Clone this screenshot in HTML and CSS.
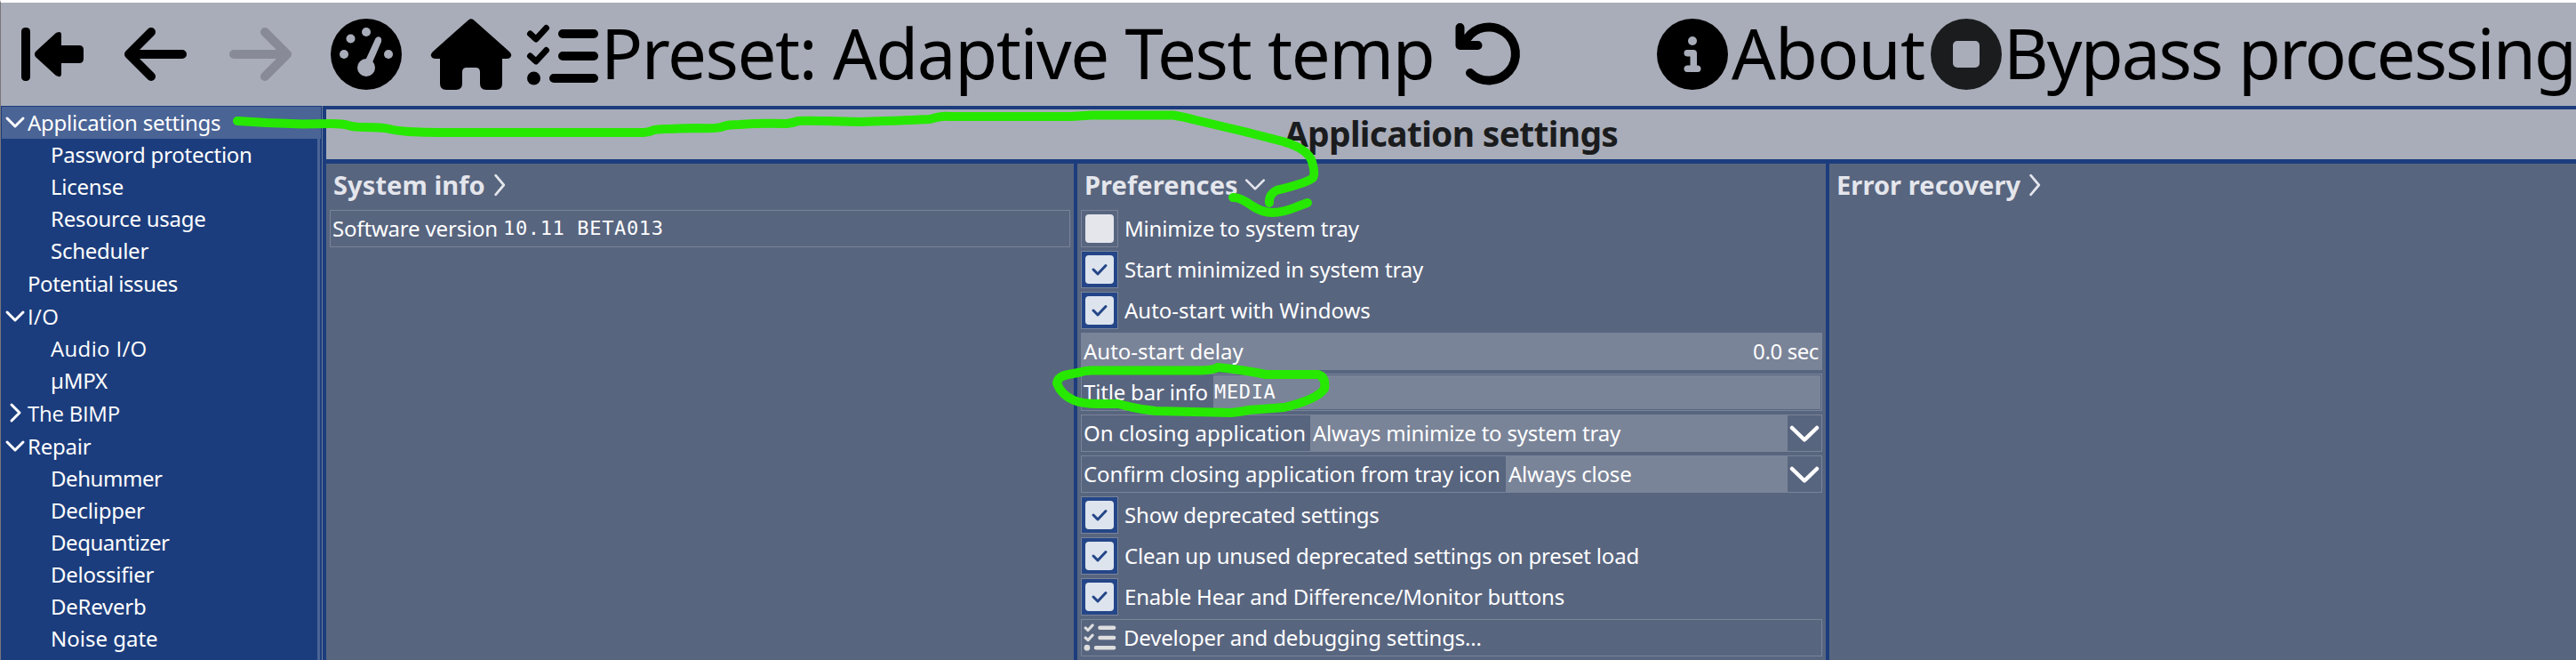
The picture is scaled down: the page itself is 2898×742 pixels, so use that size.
FILE: index.html
```html
<!DOCTYPE html>
<html lang="en">
<head>
    <meta charset="UTF-8">
    <meta name="viewport" content="width=device-width, initial-scale=1.0">
    <title>Application settings</title>
    <link rel="stylesheet" href="styles.css">
</head>
<body>
    <header class="toolbar">
        <svg class="icons-left" width="680" height="116" viewBox="0 3 680 116">
            <!-- first -->
            <rect x="24" y="31" width="10" height="60" rx="4.5"/>
            <path d="M40 58 L63 37 Q69 34 69 39 V51 H89 Q94 51 94 56 V66 Q94 71 89 71 H69 V83 Q69 88 63 85 L40 64 Q38 61 40 58Z"/>
            <!-- back -->
            <path class="line" d="M170 36 L145 61 L170 86 M145 61 H205"/>
            <!-- forward -->
            <path class="line off" d="M298 36 L323 61 L298 86 M323 61 H263"/>
            <!-- gauge -->
            <circle cx="412" cy="61" r="40"/>
            <g class="hole">
                <circle cx="412" cy="36" r="5"/>
                <circle cx="394.500" cy="43.500" r="5"/>
                <circle cx="387" cy="61" r="5"/>
                <circle cx="437" cy="61" r="5"/>
                <circle cx="412" cy="76" r="10"/>
                <path d="M411 68 L422.500 43 Q425 40 428 42 Q430 44 429 47 L419 70Z"/>
            </g>
            <!-- home -->
            <path d="M527 22.500 Q530 20 533 22.500 L573 58 Q576 61 575 63 Q574 66 570 66 H565 V94 Q565 101 558 101 H547 Q540 101 540 94 V81 Q540 76 535 76 H525 Q520 76 520 81 V94 Q520 101 513 101 H502 Q495 101 495 94 V66 H490 Q486 66 485 63 Q484 61 487 58Z"/>
            <!-- list -->
            <path class="tick" d="M596.500 38 L603 44 L614.500 31.500 M596.500 63 L603 69 L614.500 56.500"/>
            <path class="line" d="M633 38 H668 M633 63 H668 M623 88 H668"/>
            <circle cx="600.500" cy="88" r="7.500"/>
        </svg>
        <span class="preset">Preset: Adaptive Test temp</span>
        <svg class="icon-undo" width="80" height="80" viewBox="1635 21 80 80">
            <path class="line" d="M1642.500 31 V51 H1662.500 M1644 50 L1650 43.800 A30 30 0 1 1 1654 82"/>
        </svg>
        <svg class="icon-info" width="80" height="80" viewBox="0 0 80 80">
            <circle cx="40" cy="40" r="40"/>
            <g class="hole">
                <circle cx="40" cy="25" r="5"/>
                <path d="M34 35 H41 Q45 35 45 39 V52.500 H46 Q49.500 53 49.500 56 Q49.500 60 46 60 H34 Q30.500 60 30.500 56 Q30.500 53 34 52.500 H37.500 V42.500 H34 Q30.500 42 30.500 39 Q30.500 35 34 35Z"/>
            </g>
        </svg>
        <span class="about">About</span>
        <svg class="icon-stop" width="80" height="80" viewBox="0 0 80 80">
            <circle cx="40" cy="40" r="40"/>
            <rect class="hole" x="25" y="25" width="30" height="30" rx="5"/>
        </svg>
        <span class="bypass">Bypass processing</span>
    </header>

    <div class="main">
        <nav class="sidebar">
            <ul class="tree">
                <li class="top selected"><svg class="arrow" viewBox="0 0 24 24"><path d="M3 8 L12 17 L21 8"/></svg><span>Application settings</span></li>
                <li>Password protection</li>
                <li>License</li>
                <li>Resource usage</li>
                <li>Scheduler</li>
                <li class="top leaf tight">Potential issues</li>
                <li class="top"><svg class="arrow" viewBox="0 0 24 24"><path d="M3 8 L12 17 L21 8"/></svg><span class="sans io">I/O</span></li>
                <li class="sans io">Audio I/O</li>
                <li>µMPX</li>
                <li class="top"><svg class="arrow" viewBox="0 0 24 24"><path d="M8 3 L17 12 L8 21"/></svg><span class="sans">The BIMP</span></li>
                <li class="top"><svg class="arrow" viewBox="0 0 24 24"><path d="M3 8 L12 17 L21 8"/></svg><span>Repair</span></li>
                <li class="tight">Dehummer</li>
                <li>Declipper</li>
                <li class="tight">Dequantizer</li>
                <li>Delossifier</li>
                <li>DeReverb</li>
                <li class="wide">Noise gate</li>
            </ul>
            <div class="scrollbar"></div>
        </nav>

        <main class="content">
            <h1>Application settings</h1>
            <div class="columns">
                <section>
                    <h2><span>System info</span><svg class="chev right" viewBox="0 0 24 24"><path d="M7 2 L15.500 12 L7 22"/></svg></h2>
                    <div class="row"><span class="label version">Software version</span><span class="mono">10.11 BETA013</span></div>
                </section>
                <section>
                    <h2><span>Preferences</span><svg class="chev" viewBox="0 0 24 24"><path d="M3 7 L12 16 L21 7"/></svg></h2>
                    <div class="check"><i></i><span>Minimize to system tray</span></div>
                    <div class="check on"><i><svg viewBox="0 0 32 32"><path d="M9 16 L14 21 L23 11.500"/></svg></i><span>Start minimized in system tray</span></div>
                    <div class="check on"><i><svg viewBox="0 0 32 32"><path d="M9 16 L14 21 L23 11.500"/></svg></i><span class="wide">Auto-start with Windows</span></div>
                    <div class="row slider"><span class="label wide">Auto-start delay</span><span class="value">0.0 sec</span></div>
                    <div class="row input"><span class="label title-info">Title bar info</span><span class="field mono">MEDIA</span></div>
                    <div class="row"><span class="label closing wide">On closing application</span><span class="field">Always minimize to system tray</span><svg class="drop" viewBox="0 0 38 40"><path d="M5 14 L19 27.500 L33 14"/></svg></div>
                    <div class="row"><span class="label confirm">Confirm closing application from tray icon</span><span class="field">Always close</span><svg class="drop" viewBox="0 0 38 40"><path d="M5 14 L19 27.500 L33 14"/></svg></div>
                    <div class="check on"><i><svg viewBox="0 0 32 32"><path d="M9 16 L14 21 L23 11.500"/></svg></i><span>Show deprecated settings</span></div>
                    <div class="check on"><i><svg viewBox="0 0 32 32"><path d="M9 16 L14 21 L23 11.500"/></svg></i><span>Clean up unused deprecated settings on preset load</span></div>
                    <div class="check on"><i><svg viewBox="0 0 32 32"><path d="M9 16 L14 21 L23 11.500"/></svg></i><span>Enable Hear and Difference/Monitor buttons</span></div>
                    <div class="row"><svg class="list" viewBox="590 25 84 76"><path class="tick" d="M596.500 38 L603 44 L614.500 31.500 M596.500 63 L603 69 L614.500 56.500"/><path class="line" d="M633 38 H668 M633 63 H668 M623 88 H668"/><circle cx="600.500" cy="88" r="7.500"/></svg><span>Developer and debugging settings...</span></div>
                </section>
                <section>
                    <h2><span>Error recovery</span><svg class="chev right" viewBox="0 0 24 24"><path d="M7 2 L15.500 12 L7 22"/></svg></h2>
                </section>
            </div>
        </main>
    </div>

    <!-- hand drawn marks -->
    <svg class="marks" width="2898" height="739" viewBox="0 3 2898 739">
        <path d="M267 136 L300 138 L340 139.500 L372 139 Q386 139 392 141 T410 143 Q430 143 438 145 T460 148 Q478 149 496 149 H724 Q730 149 736 146 Q740 145 785 144 Q808 145 814 142 Q820 140 832 140 Q855 138 885 139 Q893 138 898 136 Q904 135 967 137 Q1030 135 1046 134 Q1060 130 1068 131 H1205 L1228 129.500 H1320 Q1330 131 1345 135 L1400 148 L1445 159.500 Q1472 168 1476 182 Q1480 195 1477 200 C1470 206 1444 212 1436 214 Q1427 219 1428 228"/>
        <path d="M1387 222 Q1394 221 1408 231 Q1420 239 1431 239 Q1444 239 1460 232 L1471 228"/>
        <path d="M1370 413 Q1366 416 1350 416.500 H1232 Q1221 416 1213 419 L1202 421 Q1190 423 1189 431 Q1194 444 1208 450 Q1217 454 1236 454 H1258 Q1280 460 1300 462 L1385 464 Q1396 463 1405 461 L1445 458 Q1482 449 1490 437 Q1492 424 1483 421 H1424 Q1400 416 1370 413"/>
    </svg>
</body>
</html>
```
FILE: styles.css
```css
* {
    padding: 0;
    margin: 0;
    box-sizing: border-box;
}
body {
    width: 2898px;
    height: 742px;
    overflow: hidden;
    position: relative;
    border-top: 3px solid white;
    border-left: 1px solid #77777b;
    background-color: #58657f;
    font-family: "Noto Sans", sans-serif;
    font-size: 24px;
    letter-spacing: -0.18px;
    color: white;
}
svg {
    flex-shrink: 0;
}
span, li {
    white-space: nowrap;
}
.toolbar {
    display: flex;
    align-items: center;
    height: 116px;
    background-color: #a9adb9;
    color: black;
    font-size: 78px;
    line-height: 112px;
}
.toolbar span {
    flex-shrink: 0;
    align-self: flex-start;
}
.icons-left {
    margin-left: -1px;
}
.hole {
    fill: #a9adb9;
}
.line {
    fill: none;
    stroke: black;
    stroke-width: 10;
    stroke-linecap: round;
    stroke-linejoin: round;
}
.off {
    stroke: #888b97;
}
.tick {
    fill: none;
    stroke: black;
    stroke-width: 7;
    stroke-linecap: round;
    stroke-linejoin: round;
}
.icon-stop {
    fill: #1b1c1e;
}
.preset {
    width: 959px;
    margin-left: -4px;
    letter-spacing: -1.45px;
}
.icon-info {
    margin-left: 149px;
}
.about {
    width: 228px;
    padding-left: 4px;
    letter-spacing: -0.8px;
}
.bypass {
    padding-left: 2px;
    letter-spacing: -1.9px;
}
.main {
    display: flex;
    height: 623px;
    background-color: #1c3d7d;
}
.sidebar {
    display: flex;
    width: 362px;
    padding-top: 1px;
    border-right: 1px solid #6d7b96;
}
.tree {
    list-style: none;
    width: 360px;
    flex-shrink: 0;
    padding-left: 1px;
    letter-spacing: -0.25px;
}
.tree li {
    display: flex;
    align-items: center;
    height: 36px;
    padding-left: 55px;
    padding-bottom: 2px;
}
.tree li.top {
    margin-top: 1px;
    padding-left: 3px;
}
.tree li.selected {
    margin-top: 0;
    background-color: #4a6496;
}
.tree li.leaf {
    padding-left: 29px;
}
.tree .tight {
    letter-spacing: -0.45px;
}
.wide {
    letter-spacing: 0;
}
.sans {
    font-family: "Open Sans", sans-serif;
}
.io {
    letter-spacing: 0.35px;
}
.arrow {
    width: 24px;
    height: 24px;
    margin-right: 2px;
    fill: none;
    stroke: white;
    stroke-width: 3;
    stroke-linecap: round;
    stroke-linejoin: round;
}
.scrollbar {
    width: 3px;
    margin-left: -4px;
    background-color: #4a6496;
    flex-shrink: 0;
}
.content {
    flex: 1;
    padding: 4px 0 0 4px;
}
h1 {
    height: 56px;
    background-color: #a9adb9;
    color: #1b1c1e;
    font-size: 39px;
    line-height: 54px;
    letter-spacing: -0.7px;
    text-align: center;
}
.columns {
    display: grid;
    grid-template-columns: 841px 842px 840px;
    gap: 4px;
    height: 558px;
    margin-top: 5px;
}
section {
    display: flex;
    flex-direction: column;
    gap: 4px;
    padding: 0 4px;
    background-color: #58657f;
}
h2 {
    display: flex;
    align-items: center;
    height: 48px;
    padding-left: 4px;
    font-size: 29px;
    letter-spacing: 0.1px;
    color: #e4e6ec;
}
h2 span {
    padding-bottom: 2px;
}
.chev {
    width: 26px;
    height: 26px;
    margin-left: 6px;
    fill: none;
    stroke: #e4e6ec;
    stroke-width: 2.5;
    stroke-linecap: round;
    stroke-linejoin: round;
}
.chev.right {
    margin-left: 4px;
}
.row {
    display: flex;
    align-items: center;
    height: 42px;
    border: 1px solid #7a8498;
}
.row > span:not(.field) {
    padding-bottom: 2px;
}
.label {
    flex-shrink: 0;
    padding-left: 2px;
}
.version {
    width: 194px;
}
.title-info {
    width: 148px;
}
.closing {
    width: 257px;
}
.confirm {
    width: 477px;
    letter-spacing: -0.08px;
}
.mono {
    font-family: "DejaVu Sans Mono", monospace;
    font-size: 22px;
    letter-spacing: 0.65px;
}
.slider {
    justify-content: space-between;
    background-color: #7a8498;
    padding-right: 3px;
}
.value {
    letter-spacing: -0.4px;
}
.field {
    display: flex;
    align-items: center;
    flex: 1;
    height: 40px;
    padding-left: 3px;
    padding-bottom: 2px;
    letter-spacing: -0.22px;
    background-color: #7a8498;
}
.input .field {
    height: 38px;
    margin-right: 1px;
    padding-left: 1px;
    letter-spacing: 0.65px;
}
.drop {
    width: 38px;
    height: 40px;
    fill: none;
    stroke: white;
    stroke-width: 4.5;
    stroke-linecap: round;
    stroke-linejoin: round;
}
.check {
    display: flex;
    align-items: center;
    height: 42px;
}
.check span {
    padding-bottom: 2px;
}
.check i {
    width: 42px;
    height: 42px;
    margin-right: 7px;
    padding: 4px;
    border: 1px solid #7a8498;
}
.check i::before {
    content: "";
    display: block;
    width: 32px;
    height: 32px;
    border-radius: 4px;
    background-color: #e4e6ec;
}
.check.on i {
    background-color: #244688;
}
.check.on i::before {
    background-color: #dde4ee;
}
.check i svg {
    display: block;
    width: 32px;
    height: 32px;
    margin-top: -32px;
    fill: none;
    stroke: #244688;
    stroke-width: 3;
    stroke-linecap: round;
    stroke-linejoin: round;
}
.list {
    width: 38px;
    height: 34px;
    margin: 0 8px 0 1px;
    fill: #dedede;
}
.list path {
    stroke: #dedede;
}
.marks {
    position: absolute;
    left: -1px;
    top: 0;
    fill: none;
    stroke: #27e800;
    stroke-width: 10;
    stroke-linecap: round;
    stroke-linejoin: round;
}
```
